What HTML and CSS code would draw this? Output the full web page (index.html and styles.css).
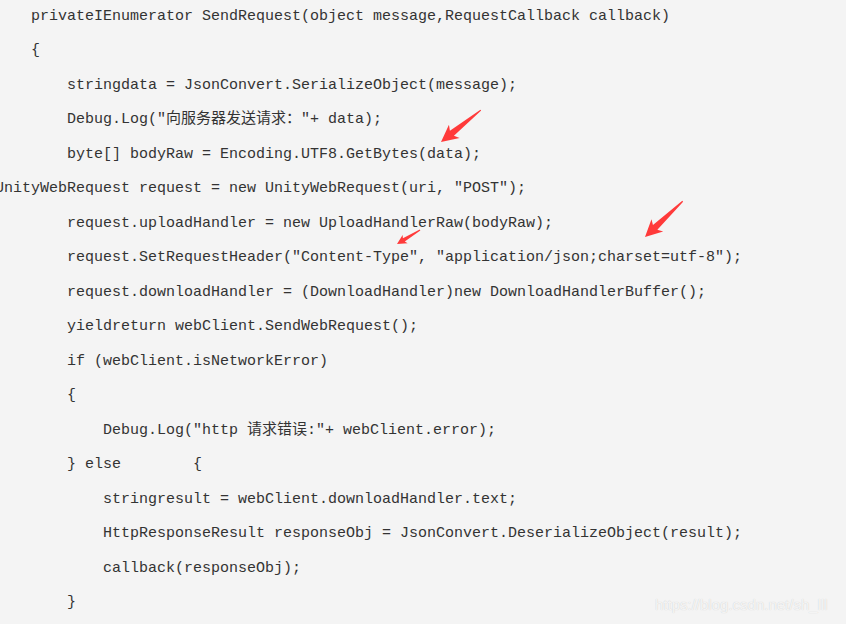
FILE: index.html
```html
<!DOCTYPE html>
<html lang="zh-CN">
<head>
    <meta charset="UTF-8">
    <meta name="viewport" content="width=device-width, initial-scale=1.0">
    <title>SendRequest</title>
    <link rel="stylesheet" href="styles.css">
</head>
<body>
    <div class="code">
        <div class="line">privateIEnumerator SendRequest(object message,RequestCallback callback)</div>
        <div class="line">{</div>
        <div class="line in1">stringdata = JsonConvert.SerializeObject(message);</div>
        <div class="line in1">Debug.Log("<span class="zh">向服务器发送请求：</span>"+ data);</div>
        <div class="line in1">byte[] bodyRaw = Encoding.UTF8.GetBytes(data);</div>
        <div class="line out1">UnityWebRequest request = new UnityWebRequest(uri, "POST");</div>
        <div class="line in1">request.uploadHandler = new UploadHandlerRaw(bodyRaw);</div>
        <div class="line in1">request.SetRequestHeader("Content-Type", "application/json;charset=utf-8");</div>
        <div class="line in1">request.downloadHandler = (DownloadHandler)new DownloadHandlerBuffer();</div>
        <div class="line in1">yieldreturn webClient.SendWebRequest();</div>
        <div class="line in1">if (webClient.isNetworkError)</div>
        <div class="line in1">{</div>
        <div class="line in2">Debug.Log("http <span class="zh">请求错误</span>:"+ webClient.error);</div>
        <div class="line in1">} else        {</div>
        <div class="line in2">stringresult = webClient.downloadHandler.text;</div>
        <div class="line in2">HttpResponseResult responseObj = JsonConvert.DeserializeObject(result);</div>
        <div class="line in2">callback(responseObj);</div>
        <div class="line in1">}</div>
    </div>

    <!-- red markers drawn over the screenshot -->
    <svg class="marks" width="846" height="624" viewBox="0 0 846 624">
        <polygon transform="translate(441,142) rotate(141.3)"
                 points="-51,-0.6 -14,-3.2 -17,-8.5 0,0 -17,8.5 -14,3.2 -51,0.6" />
        <polygon transform="translate(397,244) rotate(148.7)"
                 points="-27,-0.5 -8,-1.8 -9.5,-4.8 0,0 -9.5,4.8 -8,1.8 -27,0.5" />
        <polygon transform="translate(645,237) rotate(136.5)"
                 points="-52,-0.6 -14,-3.2 -17,-8.5 0,0 -17,8.5 -14,3.2 -52,0.6" />
    </svg>

    <div class="watermark">https://blog.csdn.net/sh_lll</div>
</body>
</html>
```

FILE: styles.css
```css
* {
    margin: 0;
    padding: 0;
    box-sizing: border-box;
}
html, body {
    width: 846px;
    height: 624px;
    overflow: hidden;
}
body {
    position: relative;
    background-color: #f4f4f4;
    color: #333;
    font-family: "Liberation Mono", "Noto Sans CJK SC", monospace;
    font-size: 15px;
}
.code {
    padding-left: 31px;
}
.line {
    height: 34.47px;
    line-height: 34.47px;
    white-space: pre;
}
.in1 {
    padding-left: 36px;
}
.in2 {
    padding-left: 72px;
}
.out1 {
    margin-left: -36px;
}
.zh {
    font-family: "Noto Sans CJK SC", sans-serif;
    font-size: 15px;
    line-height: 1;
}
.marks {
    position: absolute;
    left: 0;
    top: 0;
    fill: #ff3a3a;
}
.watermark {
    position: absolute;
    left: 655px;
    top: 596px;
    font-family: "Liberation Sans", Arial, sans-serif;
    font-size: 15px;
    color: rgba(255, 255, 255, 0.8);
    text-shadow: 0 0 1px rgba(0, 0, 0, 0.2);
}
```
